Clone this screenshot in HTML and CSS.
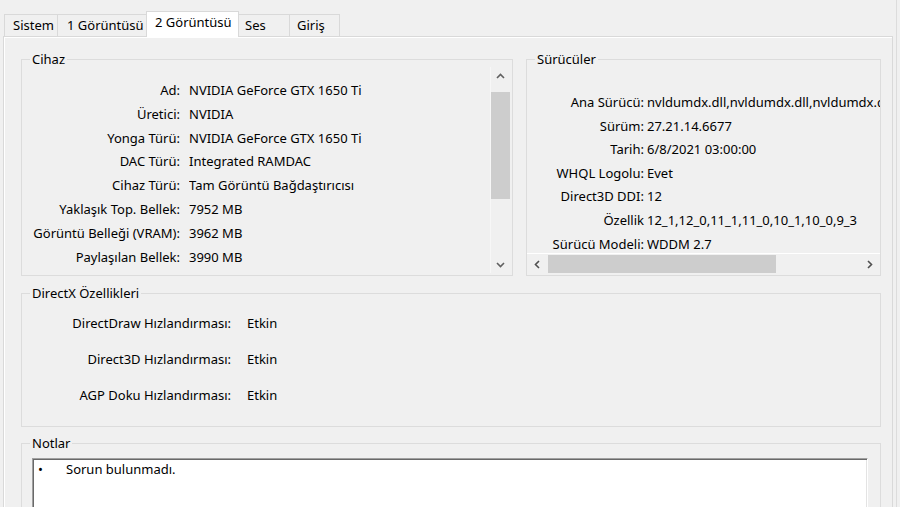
FILE: index.html
```html
<!DOCTYPE html>
<html lang="tr">
<head>
    <meta charset="UTF-8">
    <title>DirectX Tanı Aracı</title>
    <link rel="stylesheet" href="styles.css">
</head>
<body>
    <div class="window">
        <div class="tabs">
            <div class="tab tab-system">Sistem</div>
            <div class="tab tab-display1">1 Görüntüsü</div>
            <div class="tab tab-display2 active">2 Görüntüsü</div>
            <div class="tab tab-sound">Ses</div>
            <div class="tab tab-input">Giriş</div>
        </div>

        <div class="panel">
            <div class="top-row">
                <fieldset class="group group-device">
                    <legend>Cihaz</legend>
                    <div class="vlist">
                        <div class="props props-device">
                            <span class="key">Ad:</span><span class="val">NVIDIA GeForce GTX 1650 Ti</span>
                            <span class="key">Üretici:</span><span class="val">NVIDIA</span>
                            <span class="key">Yonga Türü:</span><span class="val">NVIDIA GeForce GTX 1650 Ti</span>
                            <span class="key">DAC Türü:</span><span class="val">Integrated RAMDAC</span>
                            <span class="key">Cihaz Türü:</span><span class="val">Tam Görüntü Bağdaştırıcısı</span>
                            <span class="key">Yaklaşık Top. Bellek:</span><span class="val">7952 MB</span>
                            <span class="key">Görüntü Belleği (VRAM):</span><span class="val">3962 MB</span>
                            <span class="key">Paylaşılan Bellek:</span><span class="val">3990 MB</span>
                        </div>
                        <div class="vscroll">
                            <div class="arrow">
                                <svg width="9" height="6" viewBox="0 0 9 6"><path d="M1 5 L4.5 1.5 L8 5" fill="none" stroke="#606060" stroke-width="1.6"/></svg>
                            </div>
                            <div class="vtrack"><div class="vthumb"></div></div>
                            <div class="arrow">
                                <svg width="9" height="6" viewBox="0 0 9 6"><path d="M1 1 L4.5 4.5 L8 1" fill="none" stroke="#606060" stroke-width="1.6"/></svg>
                            </div>
                        </div>
                    </div>
                </fieldset>

                <fieldset class="group group-drivers">
                    <legend>Sürücüler</legend>
                    <div class="hlist">
                        <div class="props props-drivers">
                            <span class="key">Ana Sürücü:</span><span class="val">nvldumdx.dll,nvldumdx.dll,nvldumdx.d</span>
                            <span class="key">Sürüm:</span><span class="val">27.21.14.6677</span>
                            <span class="key">Tarih:</span><span class="val">6/8/2021 03:00:00</span>
                            <span class="key">WHQL Logolu:</span><span class="val">Evet</span>
                            <span class="key">Direct3D DDI:</span><span class="val">12</span>
                            <span class="key">Özellik</span><span class="val">12_1,12_0,11_1,11_0,10_1,10_0,9_3</span>
                            <span class="key">Sürücü Modeli:</span><span class="val">WDDM 2.7</span>
                        </div>
                        <div class="hscroll">
                            <div class="arrow">
                                <svg width="6" height="9" viewBox="0 0 6 9"><path d="M5 1 L1.5 4.5 L5 8" fill="none" stroke="#505050" stroke-width="1.6"/></svg>
                            </div>
                            <div class="htrack"><div class="hthumb"></div></div>
                            <div class="arrow">
                                <svg width="6" height="9" viewBox="0 0 6 9"><path d="M1 1 L4.5 4.5 L1 8" fill="none" stroke="#505050" stroke-width="1.6"/></svg>
                            </div>
                        </div>
                    </div>
                </fieldset>
            </div>

            <fieldset class="group group-directx">
                <legend>DirectX Özellikleri</legend>
                <div class="props props-directx">
                    <span class="key">DirectDraw Hızlandırması:</span><span class="val">Etkin</span>
                    <span class="key">Direct3D Hızlandırması:</span><span class="val">Etkin</span>
                    <span class="key">AGP Doku Hızlandırması:</span><span class="val">Etkin</span>
                </div>
            </fieldset>

            <fieldset class="group group-notes">
                <legend>Notlar</legend>
                <div class="notes-box">
                    <div class="note"><span class="bullet">•</span>Sorun bulunmadı.</div>
                </div>
            </fieldset>
        </div>
    </div>
</body>
</html>
```

FILE: styles.css
```css
body {
    margin: 0;
    background-color: #f0f0f0;
    font-family: "Noto Sans", "Open Sans", sans-serif;
    font-size: 13px;
    color: #000;
    height: 507px;
    overflow: hidden;
}

.window {
    width: 896px;
    height: 507px;
    border-right: 1px solid #dcdcdc;
    overflow: hidden;
}

/* tab strip */
.tabs {
    display: flex;
    align-items: flex-end;
    height: 36px;
    padding-left: 4px;
    box-sizing: border-box;
}

.tab {
    box-sizing: border-box;
    height: 22px;
    line-height: 21px;
    padding-left: 8px;
    border: 1px solid #d9d9d9;
    border-bottom: none;
    margin-right: -1px;
    white-space: nowrap;
}

.tab-system { width: 54px; }
.tab-display1 { width: 90px; padding-left: 9px; }
.tab-display2 { width: 93px; }
.tab-sound { width: 52px; padding-left: 6px; }
.tab-input { width: 51px; padding-left: 7px; }

.tab.active {
    height: 26px;
    line-height: 20px;
    background-color: #fff;
    margin-bottom: -1px;
    position: relative;
    z-index: 1;
}

/* panel */
.panel {
    box-sizing: border-box;
    margin-left: 3px;
    width: 890px;
    height: 471px;
    border: 1px solid #d9d9d9;
    border-bottom: none;
    box-shadow: inset 1px 1px #fff;
    padding: 14px 0 0 17px;
    overflow: hidden;
}

.top-row {
    display: flex;
    gap: 13px;
}

.group {
    margin: 0;
    padding: 0;
    min-width: 0;
    box-sizing: border-box;
    border: 1px solid #dcdcdc;
}

.group legend {
    margin-left: 8px;
    padding: 0 2px;
    line-height: 16px;
}

.group-device {
    width: 492px;
    height: 225px;
    padding: 0 2px 2px 0;
}

.group-drivers {
    width: 355px;
    height: 225px;
    padding-bottom: 2px;
}

.group-directx {
    width: 860px;
    height: 142px;
    margin-top: 9px;
}

.group-notes {
    width: 860px;
    height: 120px;
    margin-top: 8px;
}

/* property rows */
.props {
    display: grid;
    grid-auto-rows: 24px;
    line-height: 24px;
    white-space: nowrap;
}

.key {
    text-align: right;
}

.val {
    overflow: hidden;
}

.props-device {
    flex: 1;
    grid-template-columns: 158px 1fr;
    column-gap: 9px;
    padding-top: 11px;
    grid-auto-rows: 23.8px;
}

.props-drivers {
    height: 186px;
    box-sizing: border-box;
    grid-template-columns: 117px 1fr;
    column-gap: 3px;
    padding-top: 23px;
    grid-auto-rows: 23.6px;
    overflow: hidden;
}

.props-directx {
    grid-template-columns: 209px 1fr;
    column-gap: 16px;
    row-gap: 12px;
    padding-top: 10px;
}

/* list with vertical scrollbar */
.vlist {
    display: flex;
    height: 206px;
}

.vscroll {
    width: 19px;
    display: flex;
    flex-direction: column;
    border-left: 1px solid #f7f7f7;
}

.arrow {
    width: 17px;
    height: 17px;
    display: flex;
    align-items: center;
    justify-content: center;
    flex: none;
}

.vscroll .arrow {
    width: 19px;
}

.vtrack {
    flex: 1;
    padding-top: 8px;
}

.vthumb {
    height: 107px;
    background-color: #cdcdcd;
}

/* list with horizontal scrollbar */
.hlist {
    display: flex;
    flex-direction: column;
}

.hscroll {
    display: flex;
    height: 20px;
    box-sizing: border-box;
    border-top: 1px solid #fff;
    padding-top: 1px;
}

.hscroll .arrow {
    height: 18px;
    width: 20px;
}

.htrack {
    flex: 1;
    padding-left: 1px;
}

.hthumb {
    width: 228px;
    height: 18px;
    background-color: #cdcdcd;
}

/* notes */
.notes-box {
    height: 80px;
    margin: 7px 12px 0 10px;
    background-color: #fff;
    border-top: 1px solid #a0a0a0;
    border-left: 1px solid #a0a0a0;
    border-right: 1px solid #fff;
    box-shadow: inset 1px 1px #696969, -1px 0 #e3e3e3 inset;
    padding: 2px 0 0 5px;
    line-height: 16px;
}

.bullet {
    display: inline-block;
    width: 28px;
}
```
